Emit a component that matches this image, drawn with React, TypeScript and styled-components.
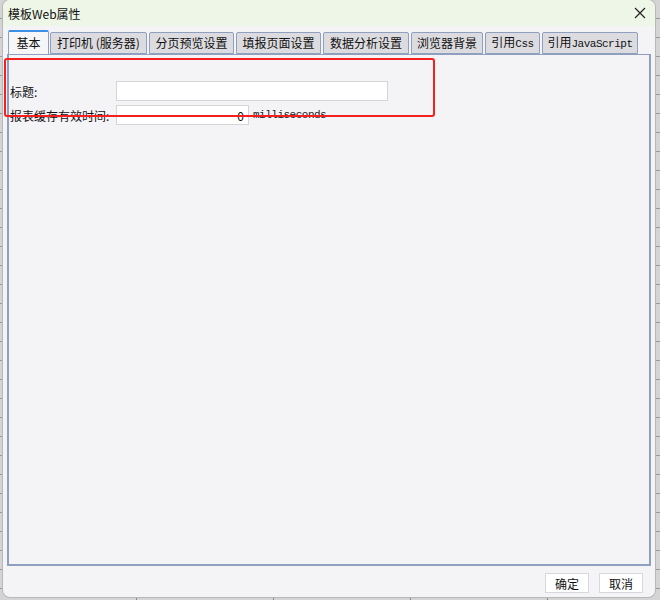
import React from "react";
import styled, { createGlobalStyle } from "styled-components";

const Global = createGlobalStyle`
  html, body { margin: 0; padding: 0; }
  body {
    width: 660px;
    height: 600px;
    overflow: hidden;
    font-family: "Noto Sans CJK SC", "Noto Sans", sans-serif;
    background-color: #d4d4d4;
    background-image:
      repeating-linear-gradient(to bottom, transparent 0, transparent 18px, #9a9a9a 18px, #9a9a9a 19px),
      repeating-linear-gradient(to right, transparent 0, transparent 136px, #8a8a8a 136px, #8a8a8a 137px);
  }
`;

const Win = styled.div`
  position: relative;
  margin-left: 3px;
  width: 652px;
  height: 597px;
  background: #f4f4f7;
  border-radius: 7px;
  overflow: hidden;
  display: flex;
  flex-direction: column;
  box-shadow: 0 0 0 1px #b8b8b8;
`;

const TitleBar = styled.div`
  height: 26px;
  flex: none;
  background: #eef6e7;
  display: flex;
  align-items: center;
  justify-content: space-between;
  padding: 0 8px 0 5px;
  font-size: 12px;
  color: #111;
`;

const Close = styled.div`
  width: 14px;
  height: 14px;
  display: flex;
  align-items: center;
  justify-content: center;
`;

const Body = styled.div`
  flex: 1;
  display: flex;
  flex-direction: column;
  padding: 4px 4px 0 4px;
  min-height: 0;
`;

const Tabs = styled.div`
  display: flex;
  align-items: flex-end;
  height: 24px;
  padding-left: 1px;
  gap: 2px;
  flex: none;
`;

const Tab = styled.div<{ $active?: boolean; $w: number }>`
  box-sizing: border-box;
  width: ${(p) => p.$w}px;
  height: ${(p) => (p.$active ? 24 : 22)}px;
  margin-right: ${(p) => (p.$active ? -1 : 0)}px;
  background: ${(p) => (p.$active ? "#f6f6f8" : "#dcdce0")};
  border: 1px solid #8e9fbf;
  border-top: ${(p) => (p.$active ? "2px solid #3c8ee6" : "1px solid #8e9fbf")};
  border-bottom: ${(p) => (p.$active ? "none" : "1px solid #8e9fbf")};
  border-radius: 2px 2px 0 0;
  display: flex;
  align-items: center;
  justify-content: center;
  font-size: 12px;
  line-height: 16px;
  color: #111;
  white-space: nowrap;
  position: relative;
  z-index: ${(p) => (p.$active ? 2 : 1)};
`;

const TabText = styled.span`
  display: inline-block;
  line-height: 16px;
`;

const Mono = styled.span`
  font-family: "Liberation Mono", "DejaVu Sans Mono", monospace;
  font-size: 11px;
  letter-spacing: -0.5px;
`;

const Panel = styled.div`
  flex: 1;
  box-sizing: border-box;
  border: 1px solid #8e9fbf;
  border-width: 1px 2px 2px 2px;
  background: #f4f4f7;
  padding: 26px 0 0 1px;
  display: flex;
  flex-direction: column;
  gap: 4px;
`;

const Row = styled.div`
  display: flex;
  align-items: center;
  height: 20px;
`;

const Label = styled.div`
  width: 106px;
  font-size: 12px;
  color: #111;
  white-space: nowrap;
`;

const Input = styled.div<{ $w: number }>`
  box-sizing: border-box;
  width: ${(p) => p.$w}px;
  height: 20px;
  background: #fff;
  border: 1px solid #d5d5d8;
  display: flex;
  align-items: center;
  justify-content: flex-end;
  padding-right: 4px;
  font-size: 12px;
  color: #111;
`;

const Unit = styled.span`
  margin-left: 4px;
  font-family: "Liberation Mono", "DejaVu Sans Mono", monospace;
  font-size: 11px;
  letter-spacing: -0.5px;
  color: #222;
`;

const Footer = styled.div`
  height: 31px;
  flex: none;
  display: flex;
  justify-content: flex-end;
  align-items: flex-start;
  padding: 7px 8px 0 0;
  box-sizing: border-box;
  gap: 10px;
`;

const Button = styled.div`
  box-sizing: border-box;
  width: 44px;
  height: 20px;
  background: #fff;
  border: 1px solid #d8d8dc;
  display: flex;
  align-items: center;
  justify-content: center;
  font-size: 12px;
  color: #111;
`;

const Highlight = styled.div`
  position: absolute;
  left: 1px;
  top: 58px;
  width: 431px;
  height: 59px;
  box-sizing: border-box;
  border: 2px solid #f51f1f;
  border-radius: 3px;
  pointer-events: none;
`;

const tabs: { label: React.ReactNode; w: number; active?: boolean }[] = [
  { label: "基本", w: 41, active: true },
  { label: "打印机 (服务器)", w: 97 },
  { label: "分页预览设置", w: 85 },
  { label: "填报页面设置", w: 85 },
  { label: "数据分析设置", w: 86 },
  { label: "浏览器背景", w: 72 },
  { label: <>引用<Mono>Css</Mono></>, w: 55 },
  { label: <>引用<Mono>JavaScript</Mono></>, w: 96 },
];

export default function App() {
  return (
    <>
      <Global />
      <Win>
        <TitleBar>
          <span>模板Web属性</span>
          <Close>
            <svg width="12" height="12" viewBox="0 0 12 12">
              <path d="M1 1L11 11M11 1L1 11" stroke="#222" strokeWidth="1.2" />
            </svg>
          </Close>
        </TitleBar>
        <Body>
          <Tabs>
            {tabs.map((t, i) => (
              <Tab key={i} $w={t.w} $active={t.active}>
                <TabText>{t.label}</TabText>
              </Tab>
            ))}
          </Tabs>
          <Panel>
            <Row>
              <Label>标题:</Label>
              <Input $w={272} />
            </Row>
            <Row>
              <Label>报表缓存有效时间:</Label>
              <Input $w={133}>0</Input>
              <Unit>milliseconds</Unit>
            </Row>
          </Panel>
          <Footer>
            <Button>确定</Button>
            <Button>取消</Button>
          </Footer>
        </Body>
        <Highlight />
      </Win>
    </>
  );
}
